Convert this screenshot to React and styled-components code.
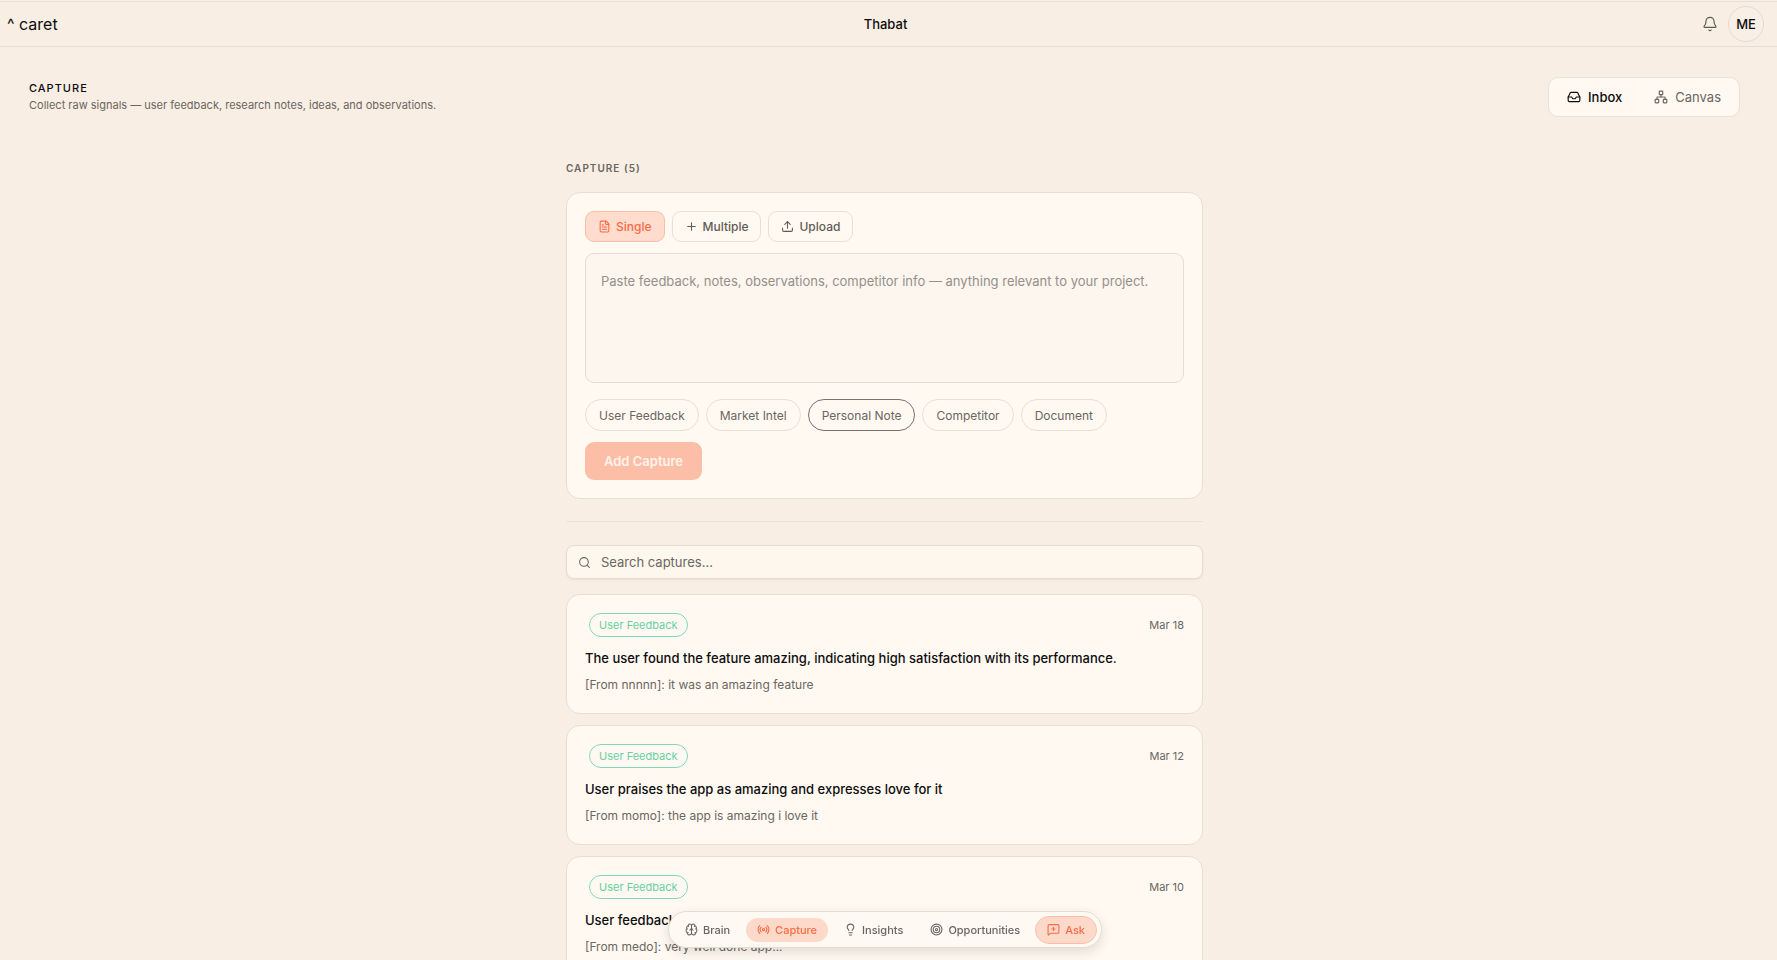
import React, { useState } from "react";
import styled, { createGlobalStyle } from "styled-components";
import {
  Bell,
  Brain,
  FileText,
  Inbox,
  Lightbulb,
  MessageSquarePlus,
  Network,
  Plus,
  Radio,
  Search,
  Target,
  Upload,
} from "lucide-react";

const GlobalStyle = createGlobalStyle`
  * {
    box-sizing: border-box;
  }

  body {
    margin: 0;
    background: #f8eee4;
    color: #0d0d0d;
    font-family: Inter, "Liberation Sans", sans-serif;
  }

  h1, h2, h3, p {
    margin: 0;
  }

  button, input, textarea {
    font-family: inherit;
  }

  button {
    cursor: pointer;
  }
`;

const Page = styled.div`
  display: flex;
  flex-direction: column;
  height: 100vh;
  overflow: hidden;
`;

const Header = styled.header`
  display: grid;
  grid-template-columns: 1fr auto 1fr;
  align-items: center;
  flex-shrink: 0;
  height: 46px;
  margin-top: 1px;
  padding: 0 13px 0 7px;
  border-top: 1px solid #ebe0d5;
  border-bottom: 1px solid #e8ddd2;
`;

const Logo = styled.a`
  color: #0d0d0d;
  font-size: 16px;
  text-decoration: none;
`;

const ProjectName = styled.span`
  font-size: 13px;
  font-weight: 500;
`;

const HeaderActions = styled.div`
  display: flex;
  align-items: center;
  justify-content: flex-end;
  gap: 10px;
`;

const BellButton = styled.button`
  display: flex;
  padding: 0;
  border: none;
  background: none;
  color: #5f5a55;
`;

const Avatar = styled.button`
  width: 36px;
  height: 36px;
  padding: 0;
  border: 1px solid #e6dbd1;
  border-radius: 50%;
  background: #f8f0e6;
  color: #0d0d0d;
  font-size: 13px;
  font-weight: 500;
`;

const Main = styled.main`
  flex: 1;
  overflow-y: auto;
  scrollbar-width: none;
  padding: 30px 37px 80px 29px;
`;

const TitleRow = styled.div`
  display: flex;
  justify-content: space-between;
  align-items: center;
`;

const PageTitle = styled.h1`
  font-size: 11px;
  line-height: 17px;
  font-weight: 500;
  letter-spacing: 1px;
`;

const Subtitle = styled.p`
  font-size: 11px;
  line-height: 17px;
  color: #6b6661;
`;

const ViewToggle = styled.div`
  display: flex;
  gap: 2px;
  padding: 3px;
  border: 1px solid #ebe0d5;
  border-radius: 10px;
  background: #fff9f2;
`;

const ViewButton = styled.button`
  display: flex;
  align-items: center;
  gap: 7px;
  height: 32px;
  padding: 0 15px;
  border: none;
  border-radius: 8px;
  background: ${(p) => (p.$active ? "#fef8f0" : "transparent")};
  color: ${(p) => (p.$active ? "#0d0d0d" : "#6b6661")};
  font-size: 13px;
  font-weight: ${(p) => (p.$active ? 500 : 400)};
`;

const Column = styled.div`
  width: 100%;
  max-width: 637px;
  margin: 41px auto 0;
`;

const SectionLabel = styled.h2`
  margin-bottom: 14px;
  font-size: 10px;
  line-height: 20px;
  font-weight: 600;
  letter-spacing: 1px;
  color: #6b6661;
`;

const Panel = styled.section`
  padding: 18px;
  border: 1px solid #eaded3;
  border-radius: 14px;
  background: #fff9f2;
`;

const ButtonRow = styled.div`
  display: flex;
  flex-wrap: wrap;
  gap: 7px;
`;

const ModeButton = styled.button`
  display: flex;
  align-items: center;
  gap: 5px;
  height: 31px;
  padding: 0 12px;
  border: 1px solid ${(p) => (p.$active ? "#fbbda8" : "#e9dfd7")};
  border-radius: 9px;
  background: ${(p) => (p.$active ? "#ffdccd" : "#fff9f2")};
  color: ${(p) => (p.$active ? "#f96b47" : "#615c57")};
  font-size: 12px;
  font-weight: 500;
`;

const NoteInput = styled.textarea`
  display: block;
  width: 100%;
  height: 130px;
  margin: 11px 0 16px;
  padding: 16px 15px;
  border: 1px solid #e6dcd3;
  border-radius: 9px;
  outline: none;
  resize: none;
  background: #fdf6ef;
  color: #0d0d0d;
  font-size: 13px;
  line-height: 22px;

  &::placeholder {
    color: #94908b;
    opacity: 1;
  }
`;

const Chip = styled.button`
  height: 32px;
  padding: 0 13px;
  border: 1px solid ${(p) => (p.$active ? "#77736f" : "#e9dfd7")};
  border-radius: 16px;
  background: #fff9f2;
  color: #6b6661;
  font-size: 12px;
`;

const AddButton = styled.button`
  height: 38px;
  margin-top: 11px;
  padding: 0 19px;
  border: none;
  border-radius: 9px;
  background: #fdbea8;
  color: #fff3ea;
  font-size: 13px;
  font-weight: 600;
`;

const Divider = styled.hr`
  height: 1px;
  margin: 22px 0 23px;
  border: none;
  background: #ece2d7;
`;

const SearchBox = styled.label`
  display: flex;
  align-items: center;
  gap: 10px;
  height: 34px;
  margin-bottom: 15px;
  padding: 0 11px;
  border: 1px solid #e8dcd0;
  border-radius: 8px;
  background: #fef7ee;
  box-shadow: 0 1px 2px rgba(90, 60, 30, 0.08);
  color: #6b6661;
`;

const SearchInput = styled.input`
  flex: 1;
  min-width: 0;
  padding: 0;
  border: none;
  outline: none;
  background: none;
  color: #0d0d0d;
  font-size: 13px;

  &::placeholder {
    color: #6b6661;
    opacity: 1;
  }
`;

const CaptureList = styled.div`
  display: flex;
  flex-direction: column;
  gap: 11px;
`;

const Card = styled.article`
  min-height: 120px;
  padding: 18px;
  border: 1px solid #eaded3;
  border-radius: 14px;
  background: #fff9f2;

  h3 {
    margin-top: 11px;
    font-size: 13px;
    line-height: 20px;
    font-weight: 500;
  }

  p {
    margin-top: 7px;
    font-size: 12px;
    line-height: 19px;
    color: #6b6661;
  }
`;

const CardTop = styled.div`
  display: flex;
  align-items: center;
  justify-content: space-between;
  padding-left: 4px;
`;

const Tag = styled.span`
  padding: 0 9px;
  border: 1px solid #80dab5;
  border-radius: 12px;
  color: #67d0a3;
  font-size: 11px;
  line-height: 22px;
`;

const CardDate = styled.time`
  font-size: 11px;
  color: #6b6661;
`;

const Dock = styled.nav`
  position: fixed;
  bottom: 12px;
  left: 0;
  right: 7px;
  display: flex;
  align-items: center;
  gap: 3px;
  width: fit-content;
  height: 37px;
  margin: 0 auto;
  padding: 0 4px;
  border: 1px solid #e5dbd1;
  border-radius: 19px;
  background: #fef9f2;
  box-shadow: 0 4px 12px rgba(60, 40, 20, 0.14);
`;

const DockItem = styled.a`
  display: flex;
  align-items: center;
  gap: 5px;
  height: ${(p) => (p.$outlined ? 28 : 26)}px;
  padding: 0 11px;
  border: 1px solid ${(p) => (p.$outlined ? "#fbbda8" : "transparent")};
  border-radius: 14px;
  background: ${(p) => (p.$active ? "#fcd9c9" : "transparent")};
  background-clip: padding-box;
  color: ${(p) => (p.$active ? "#fb6b45" : "#6b6661")};
  font-size: 11px;
  font-weight: 500;
  text-decoration: none;
`;

const modes = [
  { name: "Single", Icon: FileText },
  { name: "Multiple", Icon: Plus },
  { name: "Upload", Icon: Upload },
];

const types = [
  "User Feedback",
  "Market Intel",
  "Personal Note",
  "Competitor",
  "Document",
];

const captures = [
  {
    id: 1,
    type: "User Feedback",
    date: "Mar 18",
    title:
      "The user found the feature amazing, indicating high satisfaction with its performance.",
    text: "[From nnnnn]: it was an amazing feature",
  },
  {
    id: 2,
    type: "User Feedback",
    date: "Mar 12",
    title: "User praises the app as amazing and expresses love for it",
    text: "[From momo]: the app is amazing i love it",
  },
  {
    id: 3,
    type: "User Feedback",
    date: "Mar 10",
    title: "User feedback",
    text: "[From medo]: very well done app...",
  },
];

const dockItems = [
  { name: "Brain", Icon: Brain },
  { name: "Capture", Icon: Radio, active: true },
  { name: "Insights", Icon: Lightbulb },
  { name: "Opportunities", Icon: Target },
  { name: "Ask", Icon: MessageSquarePlus, active: true, outlined: true },
];

export default function App() {
  const [view, setView] = useState("Inbox");
  const [mode, setMode] = useState("Single");
  const [type, setType] = useState("Personal Note");
  const [note, setNote] = useState("");
  const [query, setQuery] = useState("");

  const visible = captures.filter((c) =>
    (c.title + c.text).toLowerCase().includes(query.toLowerCase())
  );

  return (
    <Page>
      <GlobalStyle />
      <Header>
        <Logo href="#">^ caret</Logo>
        <ProjectName>Thabat</ProjectName>
        <HeaderActions>
          <BellButton aria-label="Notifications">
            <Bell size={16} strokeWidth={1.75} />
          </BellButton>
          <Avatar>ME</Avatar>
        </HeaderActions>
      </Header>

      <Main>
        <TitleRow>
          <div>
            <PageTitle>CAPTURE</PageTitle>
            <Subtitle>
              Collect raw signals — user feedback, research notes, ideas, and
              observations.
            </Subtitle>
          </div>
          <ViewToggle>
            <ViewButton
              $active={view === "Inbox"}
              onClick={() => setView("Inbox")}
            >
              <Inbox size={14} />
              Inbox
            </ViewButton>
            <ViewButton
              $active={view === "Canvas"}
              onClick={() => setView("Canvas")}
            >
              <Network size={14} />
              Canvas
            </ViewButton>
          </ViewToggle>
        </TitleRow>

        <Column>
          <SectionLabel>CAPTURE (5)</SectionLabel>
          <Panel>
            <ButtonRow>
              {modes.map(({ name, Icon }) => (
                <ModeButton
                  key={name}
                  $active={mode === name}
                  onClick={() => setMode(name)}
                >
                  <Icon size={13} />
                  {name}
                </ModeButton>
              ))}
            </ButtonRow>
            <NoteInput
              aria-label="Capture text"
              placeholder="Paste feedback, notes, observations, competitor info — anything relevant to your project."
              value={note}
              onChange={(e) => setNote(e.target.value)}
            />
            <ButtonRow>
              {types.map((t) => (
                <Chip key={t} $active={type === t} onClick={() => setType(t)}>
                  {t}
                </Chip>
              ))}
            </ButtonRow>
            <AddButton disabled={!note}>Add Capture</AddButton>
          </Panel>

          <Divider />

          <SearchBox>
            <Search size={13} />
            <SearchInput
              aria-label="Search captures"
              placeholder="Search captures…"
              value={query}
              onChange={(e) => setQuery(e.target.value)}
            />
          </SearchBox>

          <CaptureList>
            {visible.map((c) => (
              <Card key={c.id}>
                <CardTop>
                  <Tag>{c.type}</Tag>
                  <CardDate>{c.date}</CardDate>
                </CardTop>
                <h3>{c.title}</h3>
                <p>{c.text}</p>
              </Card>
            ))}
          </CaptureList>
        </Column>
      </Main>

      <Dock aria-label="Sections">
        {dockItems.map(({ name, Icon, active, outlined }) => (
          <DockItem key={name} href="#" $active={active} $outlined={outlined}>
            <Icon size={13} />
            {name}
          </DockItem>
        ))}
      </Dock>
    </Page>
  );
}
